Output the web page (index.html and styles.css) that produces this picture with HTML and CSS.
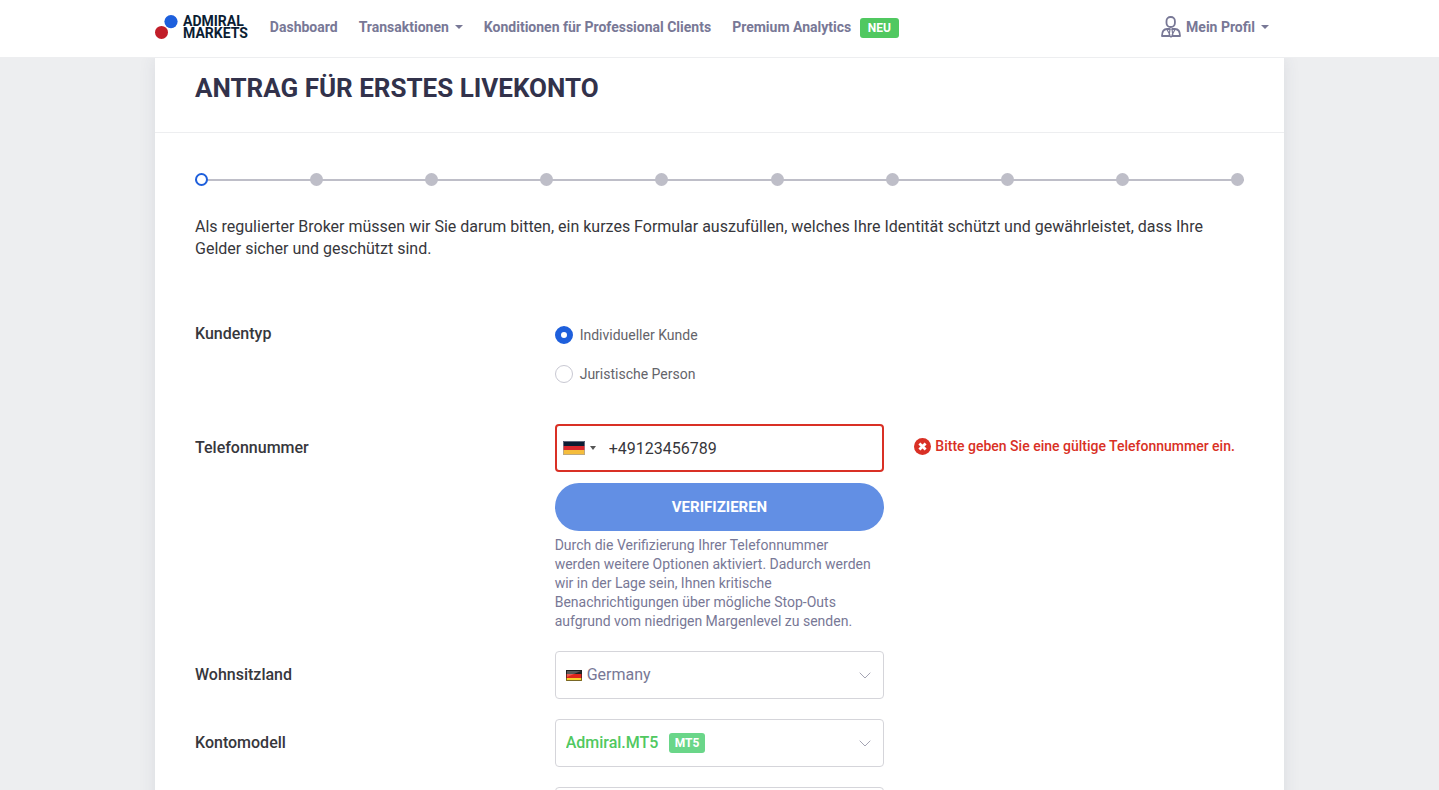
FILE: index.html
```html
<!DOCTYPE html>
<html lang="de">
<head>
  <meta charset="UTF-8">
  <meta name="viewport" content="width=device-width, initial-scale=1.0">
  <title>Antrag für erstes Livekonto</title>
  <link rel="stylesheet" href="styles.css">
</head>
<body>
  <header class="header">
    <div class="container header-inner">
      <a href="#" class="logo">
        <svg class="logo-mark" viewBox="0 0 23 25" aria-hidden="true">
          <circle cx="16" cy="6.6" r="6.6" fill="#1d5fdd"/>
          <circle cx="6.5" cy="17.4" r="6.5" fill="#c11e29"/>
        </svg>
        <span class="logo-text"><span>ADMIRAL</span><span>MARKETS</span></span>
      </a>
      <nav class="nav">
        <a href="#">Dashboard</a>
        <a href="#" class="has-caret">Transaktionen</a>
        <a href="#">Konditionen für Professional Clients</a>
        <a href="#">Premium Analytics <span class="badge">NEU</span></a>
      </nav>
      <a href="#" class="profile has-caret">
        <svg class="profile-icon" viewBox="0 0 20 22" fill="none" stroke="currentColor" stroke-width="1.8" stroke-linejoin="round" aria-hidden="true">
          <rect x="5.5" y="1" width="8.4" height="10" rx="4"/>
          <path d="M9 13H6C3 13 1 15 1 20H9M11 13H14C17 13 19 15 19 20H11"/>
          <path d="M6 13.500L9 19M14 13.500L11 19M9 13H11L11.800 19L10 21L8.200 19Z" stroke-width="1.200"/>
        </svg>
        Mein Profil
      </a>
    </div>
  </header>

  <main class="main">
    <div class="container card">
      <div class="card-head">
        <h1>ANTRAG FÜR ERSTES LIVEKONTO</h1>
      </div>
      <form class="card-body">
        <ol class="steps">
          <li class="active"></li>
          <li></li>
          <li></li>
          <li></li>
          <li></li>
          <li></li>
          <li></li>
          <li></li>
          <li></li>
          <li></li>
        </ol>
        <p class="intro">Als regulierter Broker müssen wir Sie darum bitten, ein kurzes Formular auszufüllen, welches Ihre Identität schützt und gewährleistet, dass Ihre Gelder sicher und geschützt sind.</p>

        <div class="row row-type" role="radiogroup" aria-labelledby="type-label">
          <span class="label" id="type-label">Kundentyp</span>
          <div class="radios">
            <label class="radio"><input type="radio" name="type" checked> Individueller Kunde</label>
            <label class="radio"><input type="radio" name="type"> Juristische Person</label>
          </div>
        </div>

        <div class="row">
          <label class="label" for="phone">Telefonnummer</label>
          <div>
            <div class="field">
              <input class="control phone" type="tel" id="phone" value="+49123456789">
              <span class="dial">
                <svg class="dial-flag" viewBox="0 0 22 14" aria-hidden="true">
                  <path fill="#0b1d33" d="M0 0h22v5H0z"/>
                  <path fill="#d9262c" d="M0 5h22v4H0z"/>
                  <path fill="#f5bd3c" d="M0 9h22v5H0z"/>
                  <path fill="none" stroke="#9a9aab" d="M.5.5h21v13H.5z" opacity=".6"/>
                </svg>
              </span>
            </div>
            <button type="button" class="btn">VERIFIZIEREN</button>
            <p class="help">Durch die Verifizierung Ihrer Telefonnummer werden weitere Optionen aktiviert. Dadurch werden wir in der Lage sein, Ihnen kritische Benachrichtigungen über mögliche Stop-Outs aufgrund vom niedrigen Margenlevel zu senden.</p>
          </div>
          <div class="error">
            <svg class="error-icon" viewBox="0 0 17 17" aria-hidden="true">
              <circle cx="8.5" cy="8.5" r="8.500" fill="#d93025"/>
              <path d="M5.400 5.400L11.600 11.600M11.600 5.400L5.400 11.600" stroke="#fff" stroke-width="2.800"/>
            </svg>
            Bitte geben Sie eine gültige Telefonnummer ein.
          </div>
        </div>

        <div class="row">
          <label class="label" for="country">Wohnsitzland</label>
          <div class="field">
            <select class="control country" id="country">
              <option>Germany</option>
            </select>
            <svg class="flag" viewBox="0 0 16 11" aria-hidden="true">
              <path fill="#222" d="M0 0h16v4H0z"/>
              <path fill="#e0261c" d="M0 4h16v4H0z"/>
              <path fill="#fbd02d" d="M0 8h16v3H0z"/>
              <path fill="#fff" opacity=".25" d="M1 1h14L1 7z"/>
              <path fill="none" stroke="#222" opacity=".6" d="M.5.5h15v10H.5z"/>
            </svg>
            <svg class="arrow" viewBox="0 0 12 7" aria-hidden="true"><path d="M.7.7L6 6L11.300.7"/></svg>
          </div>
        </div>

        <div class="row">
          <label class="label" for="model">Kontomodell</label>
          <div class="field">
            <select class="control model" id="model">
              <option>Admiral.MT5</option>
            </select>
            <span class="badge badge-model">MT5</span>
            <svg class="arrow" viewBox="0 0 12 7" aria-hidden="true"><path d="M.7.7L6 6L11.300.7"/></svg>
          </div>
        </div>

        <div class="row">
          <span></span>
          <div class="field">
            <select class="control">
              <option></option>
            </select>
          </div>
        </div>
      </form>
    </div>
  </main>
</body>
</html>
```
FILE: styles.css
```css
* {
  box-sizing: border-box;
}

body {
  margin: 0;
  height: 100vh;
  display: flex;
  flex-direction: column;
  background-color: #edeef0;
  color: #37373c;
  font-family: Roboto, "Liberation Sans", sans-serif;
  font-size: 16px;
  line-height: 22px;
}

a {
  color: inherit;
  text-decoration: none;
}

.container {
  width: 100%;
  max-width: 1129px;
  margin: 0 auto;
}

/* header */
.header {
  background-color: #fff;
  border-bottom: 1px solid #edeef0;
  position: relative;
  z-index: 1;
}

.header-inner {
  display: flex;
  align-items: center;
  height: 57px;
  padding: 0 15px 2px 0;
  color: #787896;
  font-size: 14px;
  font-weight: 700;
  white-space: nowrap;
}

.logo {
  display: flex;
  gap: 5px;
  margin-right: 22px;
  color: #0b1d33;
}

.logo-mark {
  width: 23px;
  height: 25px;
}

.logo-text {
  font-size: 14px;
  line-height: 12px;
}

.logo-text span {
  display: block;
}

.nav {
  display: flex;
  gap: 21px;
  flex: 1;
  padding-bottom: 2px;
}

.has-caret::after {
  content: "";
  display: inline-block;
  margin-left: 6px;
  vertical-align: 3px;
  border: 4px solid transparent;
  border-top-color: currentColor;
  border-bottom: 0;
}

.badge {
  display: inline-block;
  margin-left: 5px;
  padding: 0 8px;
  border-radius: 3px;
  background-color: #50c860;
  color: #fff;
  font-size: 12px;
  font-weight: 700;
  line-height: 20px;
}

.profile {
  display: flex;
  align-items: center;
  padding-bottom: 2px;
}

.profile-icon {
  width: 20px;
  height: 22px;
  margin-right: 5px;
}

/* card */
.main {
  flex: 1;
  min-height: 0;
  overflow-y: auto;
  scrollbar-width: none;
}

.card {
  background-color: #fff;
  box-shadow: 0 0 16px rgba(60, 65, 100, 0.1);
}

.card-head {
  padding: 14px 40px 28px;
  border-bottom: 1px solid #edeef0;
}

h1 {
  margin: 0;
  color: #32324b;
  font-size: 26px;
  font-weight: 700;
  line-height: 32px;
}

.card-body {
  padding: 40px 40px 20px;
}

.steps {
  display: flex;
  justify-content: space-between;
  margin: 0 0 30px;
  padding: 0;
  list-style: none;
  background: linear-gradient(#bebec8, #bebec8) center / 100% 2px no-repeat;
}

.steps li {
  width: 13px;
  height: 13px;
  border-radius: 50%;
  background-color: #bebec8;
}

.steps .active {
  border: 2px solid #1e5fdc;
  background-color: #fff;
}

.intro {
  margin: 0 0 63px;
}

.row {
  display: grid;
  grid-template-columns: repeat(3, 1fr);
  column-gap: 30px;
  margin-bottom: 20px;
}

.row-type {
  margin-bottom: 39px;
}

.label {
  padding-top: 13px;
  font-weight: 500;
}

.row-type .label {
  padding-top: 0;
}

.radios {
  display: flex;
  flex-direction: column;
  align-items: flex-start;
  gap: 17px;
  padding-top: 1px;
}

.radio {
  display: flex;
  align-items: center;
  gap: 7px;
  color: #64646a;
  font-size: 14px;
}

.radio input {
  appearance: none;
  width: 18px;
  height: 18px;
  margin: 0;
  border: 1px solid #c8c8d2;
  border-radius: 50%;
  background-color: #fff;
}

.radio input:checked {
  border: 6px solid #1e5fdc;
}

.field {
  position: relative;
}

.control {
  appearance: none;
  display: block;
  width: 100%;
  height: 48px;
  padding: 0 10px;
  border: 1px solid #d5d5da;
  border-radius: 4px;
  background-color: #fff;
  color: #787896;
  font: inherit;
}

.phone {
  padding-left: 52px;
  border: 2px solid #d93025;
  color: #37373c;
}

.dial {
  position: absolute;
  top: 0;
  left: 8px;
  height: 48px;
  display: flex;
  align-items: center;
  gap: 5px;
}

.dial::after {
  content: "";
  border: 3px solid transparent;
  border-top: 4px solid #555;
  border-bottom: 0;
}

.dial-flag {
  width: 22px;
  height: 14px;
}

.btn {
  display: block;
  width: 100%;
  height: 48px;
  margin: 11px 0 5px;
  border: 0;
  border-radius: 24px;
  background-color: #628fe4;
  color: #fff;
  font: inherit;
  font-size: 15px;
  font-weight: 700;
}

.help {
  margin: 0;
  padding-right: 10px;
  color: #787896;
  font-size: 14px;
  line-height: 19px;
}

.error {
  display: flex;
  align-items: center;
  align-self: start;
  gap: 4px;
  padding-top: 11px;
  color: #d93025;
  font-size: 14px;
  font-weight: 500;
}

.error-icon {
  width: 17px;
  height: 17px;
}

.country {
  padding-left: 31px;
}

.flag {
  position: absolute;
  top: 19px;
  left: 11px;
  width: 16px;
  height: 11px;
}

.model {
  color: #50c860;
  font-weight: 500;
}

.badge-model {
  position: absolute;
  top: 14px;
  left: 109px;
  padding: 0 6px;
  background-color: #6ad689;
}

.arrow {
  position: absolute;
  top: 21px;
  right: 13px;
  width: 12px;
  height: 7px;
  fill: none;
  stroke: #a5a5b4;
  pointer-events: none;
}
```
